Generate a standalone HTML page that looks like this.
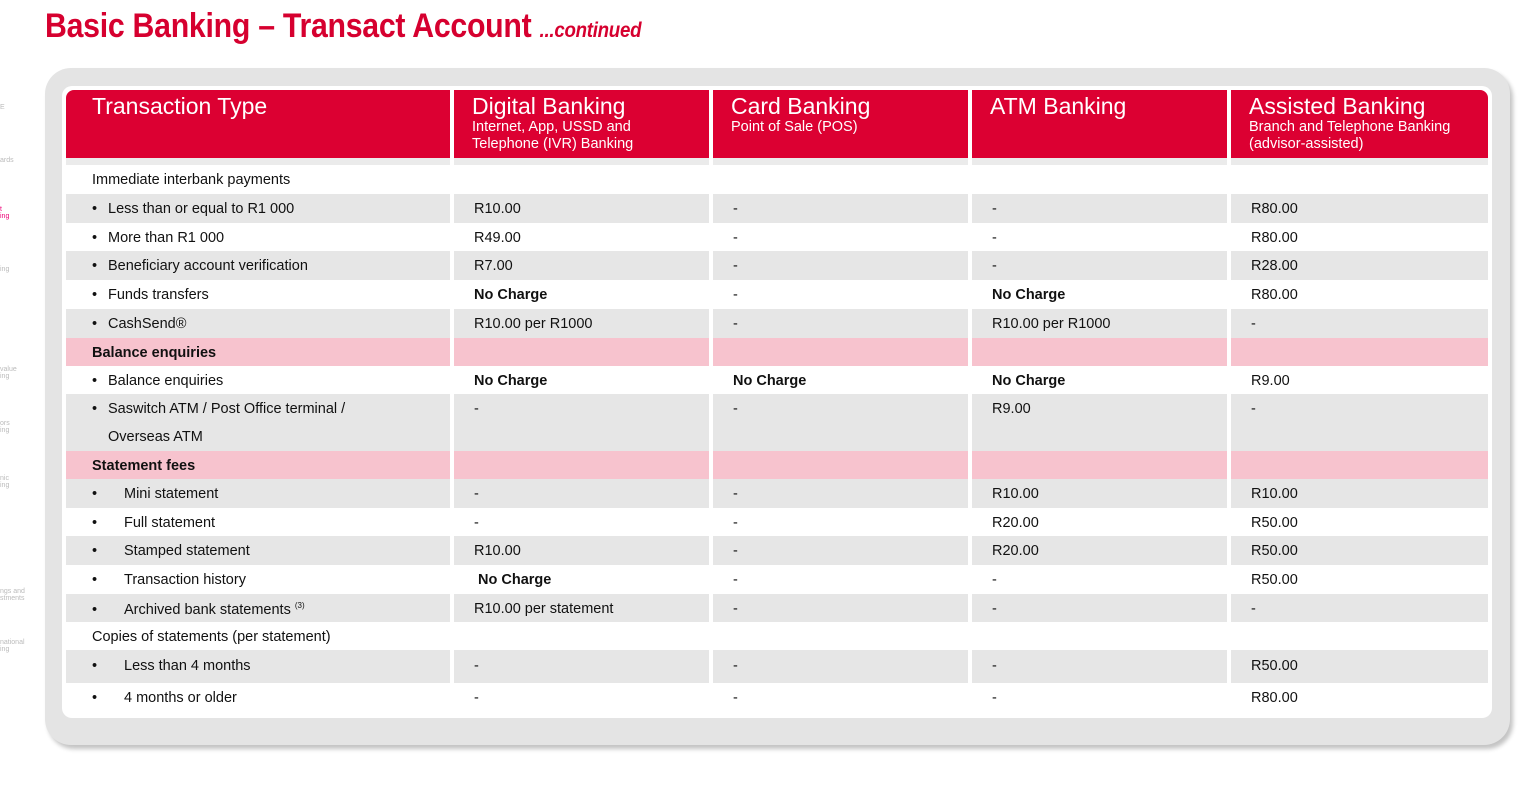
<!DOCTYPE html>
<html><head><meta charset="utf-8"><style>
*{margin:0;padding:0;box-sizing:border-box}
body{width:1524px;height:809px;background:#fff;position:relative;overflow:hidden;font-family:"Liberation Sans",sans-serif;color:#111}
.title{position:absolute;left:45px;top:7px;white-space:nowrap;color:#d6002f;font-weight:bold;font-size:34px;transform:scaleX(.89);transform-origin:left top;letter-spacing:-.3px}
.title i{font-size:21px;font-weight:bold}
.panel{position:absolute;left:45px;top:68px;width:1465px;height:677px;background:#e4e4e4;border-radius:26px;box-shadow:3px 4px 4px #c4c4c4}
.inner{position:absolute;left:62px;top:86px;width:1430px;height:632px;background:#fff;border-radius:10px}
table{position:absolute;left:62px;top:90px;width:1430px;border-collapse:separate;border-spacing:4px 0;table-layout:fixed}
td{font-size:14.5px;vertical-align:top;padding:7px 0 0 20px;white-space:nowrap}
td.c1{padding-left:26px}
th{background:#dc0032;color:#fff;text-align:left;vertical-align:top;font-weight:normal;padding:3px 0 0 18px;height:68px;font-size:14.5px;line-height:17px}
th b{font-size:23px;font-weight:normal;display:block;line-height:26px}
th.c1{padding-left:26px}
th.c1:first-child{border-top-left-radius:8px}
th:last-child{border-top-right-radius:8px}
tr.sep td{height:7px;background:#ebebeb;padding:0}
tr.g td{background:#e6e6e6}
tr.p td{background:#f7c3ce;font-weight:bold}
.b{display:inline-block;width:16px}
.b2{display:inline-block;width:32px}
.nc{font-weight:bold}
.side{position:absolute;left:0;font-size:7px;color:#bbb}
</style></head><body>
<div class="title">Basic Banking – Transact Account <i>...continued</i></div>
<div class="side" style="top:104px">E</div>
<div class="side" style="top:157px">ards</div>
<div class="side" style="top:206px;color:#e07">t<br>ing</div>
<div class="side" style="top:266px">ing</div>
<div class="side" style="top:366px">value<br>ing</div>
<div class="side" style="top:420px">ors<br>ing</div>
<div class="side" style="top:475px">nic<br>ing</div>
<div class="side" style="top:588px">ngs and<br>stments</div>
<div class="side" style="top:639px">national<br>ing</div>
<div class="panel"></div>
<div class="inner"></div>
<table>
<colgroup><col style="width:384px"><col style="width:255px"><col style="width:255px"><col style="width:255px"><col style="width:257px"></colgroup>
<tr><th class="c1"><b>Transaction Type</b></th><th><b>Digital Banking</b>Internet, App, USSD and<br>Telephone (IVR) Banking</th><th><b>Card Banking</b>Point of Sale (POS)</th><th><b>ATM Banking</b></th><th><b>Assisted Banking</b>Branch and Telephone Banking<br>(advisor-assisted)</th></tr>
<tr class="sep"><td></td><td></td><td></td><td></td><td></td></tr>
<tr style="height:29px"><td class="c1">Immediate interbank payments</td><td></td><td></td><td></td><td></td></tr>
<tr class="g" style="height:29px"><td class="c1"><span class="b">•</span>Less than or equal to R1 000</td><td>R10.00</td><td>-</td><td>-</td><td>R80.00</td></tr>
<tr style="height:28px"><td class="c1"><span class="b">•</span>More than R1 000</td><td>R49.00</td><td>-</td><td>-</td><td>R80.00</td></tr>
<tr class="g" style="height:29px"><td class="c1"><span class="b">•</span>Beneficiary account verification</td><td>R7.00</td><td>-</td><td>-</td><td>R28.00</td></tr>
<tr style="height:29px"><td class="c1"><span class="b">•</span>Funds transfers</td><td class="nc">No Charge</td><td>-</td><td class="nc">No Charge</td><td>R80.00</td></tr>
<tr class="g" style="height:29px"><td class="c1"><span class="b">•</span>CashSend®</td><td>R10.00 per R1000</td><td>-</td><td>R10.00 per R1000</td><td>-</td></tr>
<tr class="p" style="height:28px"><td class="c1">Balance enquiries</td><td></td><td></td><td></td><td></td></tr>
<tr style="height:28px"><td class="c1"><span class="b">•</span>Balance enquiries</td><td class="nc">No Charge</td><td class="nc">No Charge</td><td class="nc">No Charge</td><td>R9.00</td></tr>
<tr class="g" style="height:57px"><td class="c1" style="line-height:28px;padding-top:1px"><span class="b">•</span>Saswitch ATM / Post Office terminal /<br><span class="b"></span>Overseas ATM</td><td>-</td><td>-</td><td>R9.00</td><td>-</td></tr>
<tr class="p" style="height:28px"><td class="c1">Statement fees</td><td></td><td></td><td></td><td></td></tr>
<tr class="g" style="height:29px"><td class="c1"><span class="b2">•</span>Mini statement</td><td>-</td><td>-</td><td>R10.00</td><td>R10.00</td></tr>
<tr style="height:28px"><td class="c1"><span class="b2">•</span>Full statement</td><td>-</td><td>-</td><td>R20.00</td><td>R50.00</td></tr>
<tr class="g" style="height:29px"><td class="c1"><span class="b2">•</span>Stamped statement</td><td>R10.00</td><td>-</td><td>R20.00</td><td>R50.00</td></tr>
<tr style="height:29px"><td class="c1"><span class="b2">•</span>Transaction history</td><td class="nc">&nbsp;No Charge</td><td>-</td><td>-</td><td>R50.00</td></tr>
<tr class="g" style="height:28px"><td class="c1"><span class="b2">•</span>Archived bank statements <sup style="font-size:8px">(3)</sup></td><td>R10.00 per statement</td><td>-</td><td>-</td><td>-</td></tr>
<tr style="height:28px"><td class="c1">Copies of statements (per statement)</td><td></td><td></td><td></td><td></td></tr>
<tr class="g" style="height:33px"><td class="c1" style="padding-top:8px"><span class="b2">•</span>Less than 4 months</td><td style="padding-top:8px">-</td><td style="padding-top:8px">-</td><td style="padding-top:8px">-</td><td style="padding-top:8px">R50.00</td></tr>
<tr style="height:31px"><td class="c1"><span class="b2">•</span>4 months or older</td><td>-</td><td>-</td><td>-</td><td>R80.00</td></tr>
</table>
</body></html>
